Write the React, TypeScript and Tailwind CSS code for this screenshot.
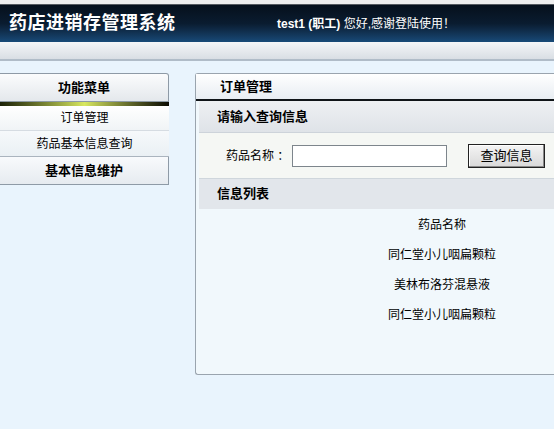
import React from "react";

const font = { fontFamily: '"Liberation Sans", "Noto Sans CJK SC", sans-serif' };

export default function App() {
  const rows = ["同仁堂小儿咽扁颗粒", "美林布洛芬混悬液", "同仁堂小儿咽扁颗粒"];
  return (
    <div className="w-[554px] h-[429px] overflow-hidden bg-[#e9f4fd] text-[12px] text-black" style={font}>
      {/* top header */}
      <div className="h-[4px] bg-[#eeeeee]" />
      <div className="h-[1px] bg-[#555a60]" />
      <div className="h-[37px] bg-gradient-to-b from-[#06101c] via-[#0a1c30] to-[#184a78] flex items-center">
        <div className="pl-[9px] w-[270px] text-[18px] font-bold text-white tracking-[0.5px]">药店进销存管理系统</div>
        <div className="pl-[7px] text-white text-[12px]">
          <span className="font-bold">test1 (职工)</span> 您好,感谢登陆使用！
        </div>
      </div>
      <div className="h-[17px] bg-gradient-to-b from-[#f4f6f8] to-[#d9dee4]" />
      <div className="h-[2px] bg-[#b0bcc8]" />
      <div className="flex pt-[12px]">
        {/* left menu */}
        <div className="w-[169px] shrink-0">
          <div className="border border-[#8e9aa6] border-l-0 rounded-tr-[3px] bg-gradient-to-b from-[#fbfcfd] to-[#e4e8ec] h-[29px] flex items-center justify-center font-bold text-[13px]">
            功能菜单
          </div>
          <div className="h-[4px] bg-gradient-to-r from-[#1c2208] via-[#d8e860] to-[#0c0c04]" />
          <div className="h-[25px] flex items-center justify-center border-b border-[#d6dce2] bg-gradient-to-b from-[#ffffff] to-[#f0f4f6]">订单管理</div>
          <div className="h-[26px] flex items-center justify-center border-b border-[#aab4be] bg-gradient-to-b from-[#f6f9fb] to-[#eaf0f4]">药品基本信息查询</div>
          <div className="h-[28px] flex items-center justify-center font-bold text-[13px] border-r border-b border-[#8e9aa6] bg-gradient-to-b from-[#f8fafc] to-[#e6ebf0]">
            基本信息维护
          </div>
        </div>
        {/* right panel */}
        <div className="ml-[26px] flex-1 h-[302px] border border-[#9aa4ae] border-r-0 rounded-tl-[3px] rounded-bl-[3px] bg-[#f1f8fc]">
          <div className="h-[25px] flex items-center pl-[24px] font-bold text-[13px] bg-gradient-to-b from-[#ffffff] to-[#e8edf2]">订单管理</div>
          <div className="h-[2px] bg-[#101418]" />
          <div className="mx-[3px]">
            <div className="h-[32px] flex items-center pl-[18px] font-bold text-[13px] bg-gradient-to-b from-[#eef0f3] to-[#dfe3e8] border-b border-[#cdd3da]">请输入查询信息</div>
            <div className="h-[46px] flex items-center bg-[#f5f7f4] border-b border-[#cfd6dc]">
              <span className="pl-[27px] w-[93px]">药品名称 ：</span>
              <div className="w-[155px] h-[22px] bg-white border border-[#7d858c]" />
              <div className="ml-[21px] w-[77px] h-[24px] border border-[#222] bg-gradient-to-b from-[#f4f4f4] to-[#d9d9d9] flex items-center justify-center text-[13px] shadow-[inset_-1px_-1px_0_#888,inset_1px_1px_0_#fff]">
                查询信息
              </div>
            </div>
            <div className="h-[30px] flex items-center pl-[18px] font-bold text-[13px] bg-[#e2e6eb]">信息列表</div>
            <div className="w-[486px] pt-[1px]">
              <div className="h-[30px] flex items-center justify-center">药品名称</div>
              {rows.map((r, i) => (
                <div key={i} className="h-[30px] flex items-center justify-center">{r}</div>
              ))}
            </div>
          </div>
        </div>
      </div>
    </div>
  );
}
